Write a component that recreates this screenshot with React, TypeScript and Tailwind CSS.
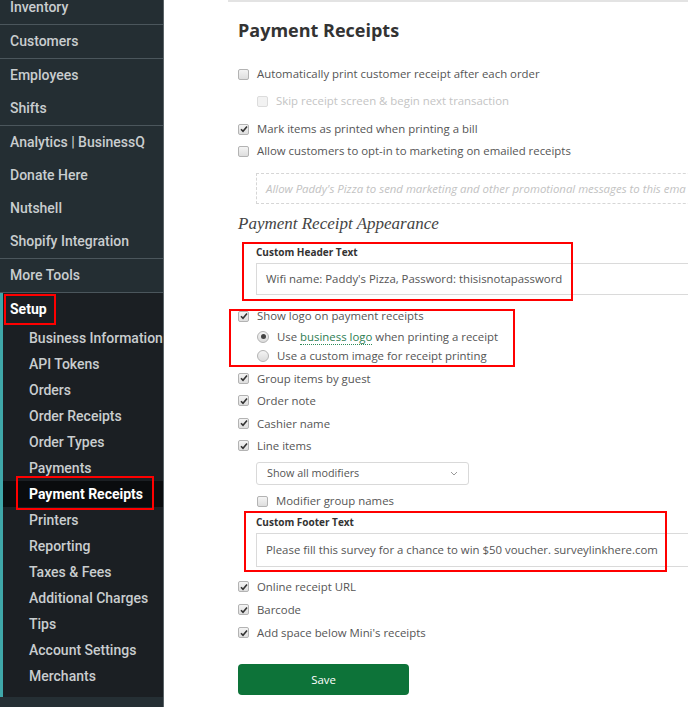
import React from "react";

const topGroups = [
  ["Inventory"],
  ["Customers"],
  ["Employees", "Shifts"],
  ["Analytics | BusinessQ", "Donate Here", "Nutshell", "Shopify Integration"],
  ["More Tools"],
];

const setupItems = [
  "Business Information",
  "API Tokens",
  "Orders",
  "Order Receipts",
  "Order Types",
  "Payments",
  "Payment Receipts",
  "Printers",
  "Reporting",
  "Taxes & Fees",
  "Additional Charges",
  "Tips",
  "Account Settings",
  "Merchants",
];

function Checkbox({ checked, disabled }: { checked?: boolean; disabled?: boolean }) {
  return (
    <span
      className={`flex h-[11px] w-[11px] shrink-0 items-center justify-center rounded-[2px] border ${
        disabled ? "border-[#dcdcdc] bg-[#f2f2f2]" : "border-[#b3b3b3] bg-gradient-to-b from-[#f4f4f4] to-[#dedede]"
      }`}
    >
      {checked && (
        <svg width="8" height="8" viewBox="0 0 8 8">
          <path d="M1 4.2 L3 6.3 L7 1.5" fill="none" stroke="#333" strokeWidth="1.6" />
        </svg>
      )}
    </span>
  );
}

function Radio({ checked }: { checked?: boolean }) {
  return (
    <span className="flex h-[12px] w-[12px] shrink-0 items-center justify-center rounded-full border border-[#b3b3b3] bg-gradient-to-b from-[#f4f4f4] to-[#dcdcdc]">
      {checked && <span className="h-[5px] w-[5px] rounded-full bg-[#444]" />}
    </span>
  );
}

function CheckRow({
  label,
  checked,
  indent,
  disabled,
  h = "h-[22px]",
}: {
  label: string;
  checked?: boolean;
  indent?: boolean;
  disabled?: boolean;
  h?: string;
}) {
  return (
    <div className={`flex items-center gap-[8px] ${h} ${indent ? "pl-[19px]" : ""}`}>
      <Checkbox checked={checked} disabled={disabled} />
      <span className={`text-[11.4px] ${disabled ? "text-[#c4c4c4]" : "text-[#555]"}`}>{label}</span>
    </div>
  );
}

function Sidebar() {
  return (
    <aside className="flex w-[164px] shrink-0 flex-col border-r border-[#5b6468] bg-[#242e33] font-['Roboto',sans-serif] text-[14px] font-medium text-[#c9cdcf]">
      <div className="-mt-[9px]">
        {topGroups.map((group, gi) => (
          <div key={gi} className="border-b border-[#4b565c]">
            {group.map((item) => (
              <div key={item} className="flex h-[33px] items-center pl-[10px]">
                {item}
              </div>
            ))}
          </div>
        ))}
      </div>
      <div className="flex border-l-[3px] border-[#3fa7a9] bg-[#1b1f23] pb-[8px]">
        <div className="flex-1">
          <div className="relative flex h-[32px] items-center pl-[7px] font-bold text-white">
            Setup
            <span className="absolute left-[1px] top-[1px] h-[31px] w-[52px] border-2 border-[#ff0000]" />
          </div>
          {setupItems.map((item) =>
            item === "Payment Receipts" ? (
              <div key={item} className="relative flex h-[26px] items-center bg-[#0a0c0e] pl-[26px] font-bold text-white">
                {item}
                <span className="absolute left-[13px] top-[-5px] h-[34px] w-[138px] border-2 border-[#ff0000]" />
              </div>
            ) : (
              <div key={item} className="flex h-[26px] items-center pl-[26px]">
                {item}
              </div>
            )
          )}
        </div>
      </div>
      <div className="flex-1 bg-[#252f34]" />
    </aside>
  );
}

export default function App() {
  return (
    <div className="flex h-[707px] w-[688px] overflow-hidden bg-white">
      <Sidebar />
      <main className="relative flex-1 overflow-hidden font-['Open_Sans',sans-serif]">
        <div className="ml-[64px] h-[2px] bg-[#e3e3e3]" />
        <div className="ml-[74px]">
          <h1 className="mt-[15px] h-[26px] text-[18px] font-bold leading-[26px] text-[#333]">Payment Receipts</h1>

          <div className="mt-[20px]">
            <CheckRow label="Automatically print customer receipt after each order" />
          </div>
          <div className="mt-[5px]">
            <CheckRow label="Skip receipt screen & begin next transaction" indent disabled />
          </div>
          <div className="mt-[6px]">
            <CheckRow label="Mark items as printed when printing a bill" checked />
            <CheckRow label="Allow customers to opt-in to marketing on emailed receipts" />
          </div>

          <div className="ml-[18px] mt-[11px] flex h-[31px] w-[480px] items-center border border-dashed border-[#d6d6d6] pl-[9px] text-[11.4px] italic whitespace-nowrap text-[#c2c2c2]">
            Allow Paddy's Pizza to send marketing and other promotional messages to this ema
          </div>

          <h2 className="mt-[8px] h-[24px] font-['Liberation_Serif',serif] text-[17px] italic leading-[24px] text-[#444]">
            Payment Receipt Appearance
          </h2>

          <div className="ml-[18px] mt-[9px] h-[14px] text-[10px] font-bold leading-[14px] text-[#333]">Custom Header Text</div>
          <div className="ml-[18px] mt-[4px] flex h-[32px] w-[480px] items-center border border-[#dadada] pl-[9px] text-[11.4px] whitespace-nowrap text-[#555]">
            Wifi name: Paddy's Pizza, Password: thisisnotapassword
          </div>

          <div className="mt-[10px]">
            <CheckRow label="Show logo on payment receipts" checked />
            <div className="flex h-[19px] items-center gap-[8px] pl-[19px] text-[11.4px] text-[#555]">
              <Radio checked />
              <span>
                Use{" "}
                <span className="border-b border-dotted border-[#2d8a57] text-[#2d7d52]">business logo</span> when
                printing a receipt
              </span>
            </div>
            <div className="flex h-[19px] items-center gap-[8px] pl-[19px] text-[11.4px] text-[#555]">
              <Radio />
              <span>Use a custom image for receipt printing</span>
            </div>
          </div>

          <div className="mt-[2px]">
            <CheckRow label="Group items by guest" checked h="h-[22.5px]" />
            <CheckRow label="Order note" checked h="h-[22.5px]" />
            <CheckRow label="Cashier name" checked h="h-[22.5px]" />
            <CheckRow label="Line items" checked h="h-[22.5px]" />
          </div>

          <div className="ml-[18px] mt-[5px] flex h-[23px] w-[213px] items-center justify-between rounded-[3px] border border-[#d9d9d9] pl-[10px] pr-[10px] text-[10.8px] text-[#555]">
            <span>Show all modifiers</span>
            <svg width="8" height="5" viewBox="0 0 8 5">
              <path d="M1 1 L4 4 L7 1" fill="none" stroke="#9a9a9a" strokeWidth="1" />
            </svg>
          </div>

          <div className="mt-[5px]">
            <CheckRow label="Modifier group names" indent />
          </div>

          <div className="ml-[18px] mt-[3px] h-[14px] text-[10px] font-bold leading-[14px] text-[#333]">Custom Footer Text</div>
          <div className="ml-[18px] mt-[4px] flex h-[34px] w-[480px] items-center border border-[#dadada] pl-[9px] text-[11.4px] whitespace-nowrap text-[#555]">
            Please fill this survey for a chance to win $50 voucher. surveylinkhere.com
          </div>

          <div className="mt-[8px]">
            <CheckRow label="Online receipt URL" checked h="h-[23px]" />
            <CheckRow label="Barcode" checked h="h-[23px]" />
            <CheckRow label="Add space below Mini's receipts" checked h="h-[23px]" />
          </div>

          <button className="mt-[20px] flex h-[31px] w-[171px] items-center justify-center rounded-[4px] bg-[#0d7339] text-[11.4px] text-white">
            Save
          </button>
        </div>

        <span className="pointer-events-none absolute left-[78px] top-[242px] h-[59px] w-[331px] border-2 border-[#ff0000]" />
        <span className="pointer-events-none absolute left-[65px] top-[309px] h-[58px] w-[286px] border-2 border-[#ff0000]" />
        <span className="pointer-events-none absolute left-[80px] top-[511px] h-[61px] w-[423px] border-2 border-[#ff0000]" />
      </main>
    </div>
  );
}
